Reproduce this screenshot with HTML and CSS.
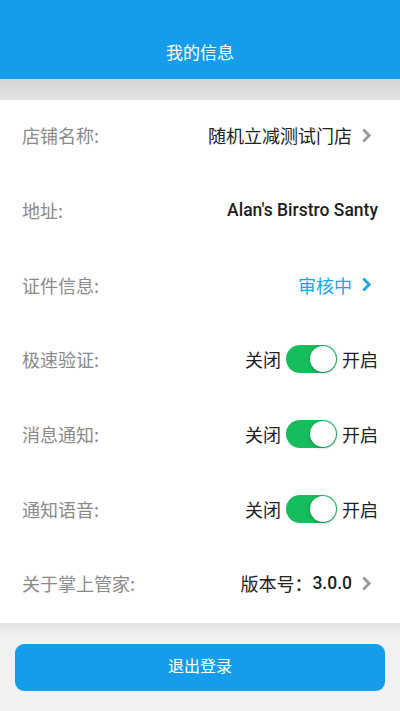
FILE: index.html
```html
<!DOCTYPE html>
<html lang="zh">
<head>
<meta charset="utf-8">
<link rel="stylesheet" href="styles.css">
</head>
<body>
<div class="page">
  <header class="topbar"><span class="title">我的信息</span></header>
  <div class="band"></div>
  <ul class="list">
    <li class="row"><span class="label">店铺名称:</span><span class="value">随机立减测试门店<svg class="chev" viewBox="0 0 10 14"><path d="M2 1.5 L7.5 7 L2 12.5" /></svg></span></li>
    <li class="row"><span class="label">地址:</span><span class="value en">Alan's Birstro Santy</span></li>
    <li class="row"><span class="label">证件信息:</span><span class="value blue">审核中<svg class="chev chev-blue" viewBox="0 0 10 14"><path d="M2 1.5 L7.5 7 L2 12.5" /></svg></span></li>
    <li class="row"><span class="label">极速验证:</span><span class="value"><span class="opt">关闭</span><span class="switch"><span class="knob"></span></span><span class="opt">开启</span></span></li>
    <li class="row"><span class="label">消息通知:</span><span class="value"><span class="opt">关闭</span><span class="switch"><span class="knob"></span></span><span class="opt">开启</span></span></li>
    <li class="row"><span class="label">通知语音:</span><span class="value"><span class="opt">关闭</span><span class="switch"><span class="knob"></span></span><span class="opt">开启</span></span></li>
    <li class="row"><span class="label">关于掌上管家:</span><span class="value">版本号：<span class="en">3.0.0</span><svg class="chev" viewBox="0 0 10 14"><path d="M2 1.5 L7.5 7 L2 12.5" /></svg></span></li>
  </ul>
  <div class="footer">
    <button class="logout">退出登录</button>
  </div>
</div>
</body>
</html>
```
FILE: styles.css
```css
* { box-sizing: border-box; }
html, body { margin: 0; padding: 0; }
body {
  width: 400px;
  height: 711px;
  overflow: hidden;
  background: #f2f0f2;
  font-family: "Noto Sans CJK SC", "Roboto", sans-serif;
}
.page { display: flex; flex-direction: column; height: 711px; }
.topbar {
  height: 79px;
  background: #159deb;
  display: flex;
  align-items: flex-end;
  justify-content: center;
  padding-bottom: 15px;
}
.title { color: #fff; font-size: 17px; line-height: 24px; }
.band {
  height: 21px;
  background: linear-gradient(#d6d4d6, #dddbdd 40%, #e4e2e4);
  border-top: 1px solid #c9dbe9;
}
.list {
  list-style: none;
  margin: 0;
  padding: 0;
  background: #fff;
}
.row {
  height: 74.7px;
  display: flex;
  align-items: center;
  justify-content: space-between;
  padding: 0 22px 4px;
  line-height: 26px;
}
.label { color: #8a8a8a; font-size: 18px; }
.value {
  display: flex;
  align-items: center;
  color: #222;
  font-size: 18px;
}
.en { font-family: "Roboto", sans-serif; font-weight: 500; color: #1e1e1e; }
.value.en { font-size: 17.5px; }
.value .en { font-size: 17.5px; }
.blue { color: #1aa3e8; }
.chev {
  width: 11px;
  height: 15px;
  margin-left: 9px;
  margin-right: 6px;
  fill: none;
  stroke: #9a9a9a;
  stroke-width: 2.6;
}
.chev-blue { stroke: #1aa3e8; }
.opt { color: #222; }
.switch {
  width: 51px;
  height: 28px;
  border-radius: 14px;
  background: #16bd5c;
  margin: 0 5px;
  position: relative;
}
.knob {
  position: absolute;
  right: 1px;
  top: 1px;
  width: 26px;
  height: 26px;
  border-radius: 50%;
  background: #fff;
  box-shadow: 0 1px 3px rgba(0,0,0,0.3);
}
.footer {
  flex: 1;
  background: linear-gradient(#e2e0e2, #f2f0f2 12px, #f2f0f2);
  padding: 21px 15px 0;
}
.logout {
  width: 370px;
  height: 47px;
  border: none;
  border-radius: 9px;
  background: #159deb;
  color: #fff;
  font-family: "Noto Sans CJK SC", sans-serif;
  font-size: 16px;
  line-height: 20px;
  padding: 0 0 4px;
}
```
